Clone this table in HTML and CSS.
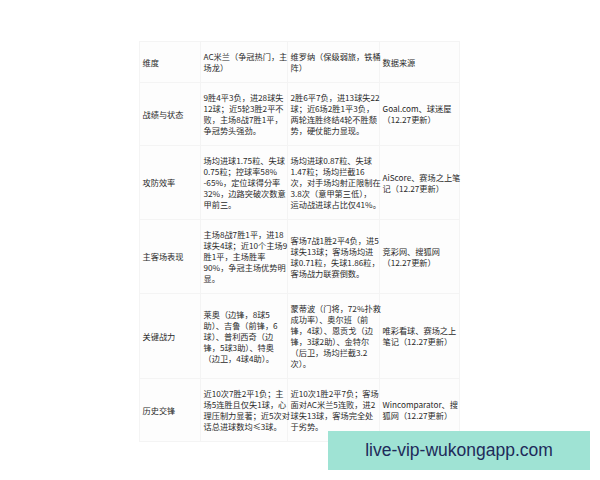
FILE: index.html
```html
<!DOCTYPE html>
<html lang="zh">
<head>
<meta charset="utf-8">
<link rel="stylesheet" href="styles.css">
</head>
<body>
<div class="page">
  <table class="grid">
    <colgroup>
      <col class="c1"><col class="c2"><col class="c3"><col class="c4">
    </colgroup>
    <tr>
      <td>维度</td>
      <td>AC米兰（争冠热门，主<br>场龙）</td>
      <td>维罗纳（保级弱旅，铁桶<br>阵）</td>
      <td>数据来源</td>
    </tr>
    <tr>
      <td>战绩与状态</td>
      <td>9胜4平3负，进28球失<br>12球；近5轮3胜2平不<br>败，主场8战7胜1平，<br>争冠势头强劲。</td>
      <td>2胜6平7负，进13球失22<br>球；近6场2胜1平3负，<br>两轮连胜终结4轮不胜颓<br>势，硬仗能力显现。</td>
      <td>Goal.com、球迷屋<br>（12.27更新）</td>
    </tr>
    <tr>
      <td>攻防效率</td>
      <td>场均进球1.75粒、失球<br>0.75粒；控球率58%<br>-65%，定位球得分率<br>32%，边路突破次数意<br>甲前三。</td>
      <td>场均进球0.87粒、失球<br>1.47粒；场均拦截16<br>次，对手场均射正限制在<br>3.8次（意甲第三低），<br>运动战进球占比仅41%。</td>
      <td>AiScore、赛场之上笔<br>记（12.27更新）</td>
    </tr>
    <tr>
      <td>主客场表现</td>
      <td>主场8战7胜1平，进18<br>球失4球；近10个主场9<br>胜1平，主场胜率<br>90%，争冠主场优势明<br>显。</td>
      <td>客场7战1胜2平4负，进5<br>球失13球；客场场均进<br>球0.71粒，失球1.86粒，<br>客场战力联赛倒数。</td>
      <td>竞彩网、搜狐网<br>（12.27更新）</td>
    </tr>
    <tr>
      <td>关键战力</td>
      <td>莱奥（边锋，8球5<br>助）、吉鲁（前锋，6<br>球）、普利西奇（边<br>锋，5球3助）、特奥<br>（边卫，4球4助）。</td>
      <td>蒙蒂波（门将，72%扑救<br>成功率）、奥尔班（前<br>锋，4球）、恩贡戈（边<br>锋，3球2助）、金特尔<br>（后卫，场均拦截3.2<br>次）。</td>
      <td>唯彩看球、赛场之上<br>笔记（12.27更新）</td>
    </tr>
    <tr>
      <td>历史交锋</td>
      <td>近10次7胜2平1负；主<br>场5连胜且仅失1球，心<br>理压制力显著；近5次对<br>话总进球数均≤3球。</td>
      <td>近10次1胜2平7负；客场<br>面对AC米兰5连败，进2<br>球失13球，客场完全处<br>于劣势。</td>
      <td>Wincomparator、搜<br>狐网（12.27更新）</td>
    </tr>
  </table>
  <div class="watermark">live-vip-wukongapp.com</div>
</div>
</body>
</html>
```

FILE: styles.css
```css
html, body {
  margin: 0;
  padding: 0;
  background: #ffffff;
}

.page {
  position: relative;
  width: 600px;
  height: 480px;
  overflow: hidden;
  padding: 41px 0 0 139px;
  box-sizing: border-box;
}

.grid {
  border-collapse: collapse;
  table-layout: fixed;
  width: 320px;
  font-family: "Noto Sans CJK SC", sans-serif;
  font-size: 8.2px;
  line-height: 11px;
  color: #2a2a2a;
  background: #fdfdfd;
}

.c1 { width: 61px; }
.c2 { width: 87px; }
.c3 { width: 92px; }
.c4 { width: 80px; }

.grid td {
  padding: 9px 1px 9px 2.5px;
  vertical-align: middle;
  border: 1px solid #f4f4f4;
  white-space: nowrap;
  overflow: visible;
}

.watermark {
  position: absolute;
  left: 328px;
  top: 431px;
  width: 262px;
  height: 39px;
  background: #9fe3d4;
  color: #1e2b5a;
  font-family: "Liberation Sans", Arial, sans-serif;
  font-size: 17.5px;
  line-height: 39px;
  text-align: center;
}
```
